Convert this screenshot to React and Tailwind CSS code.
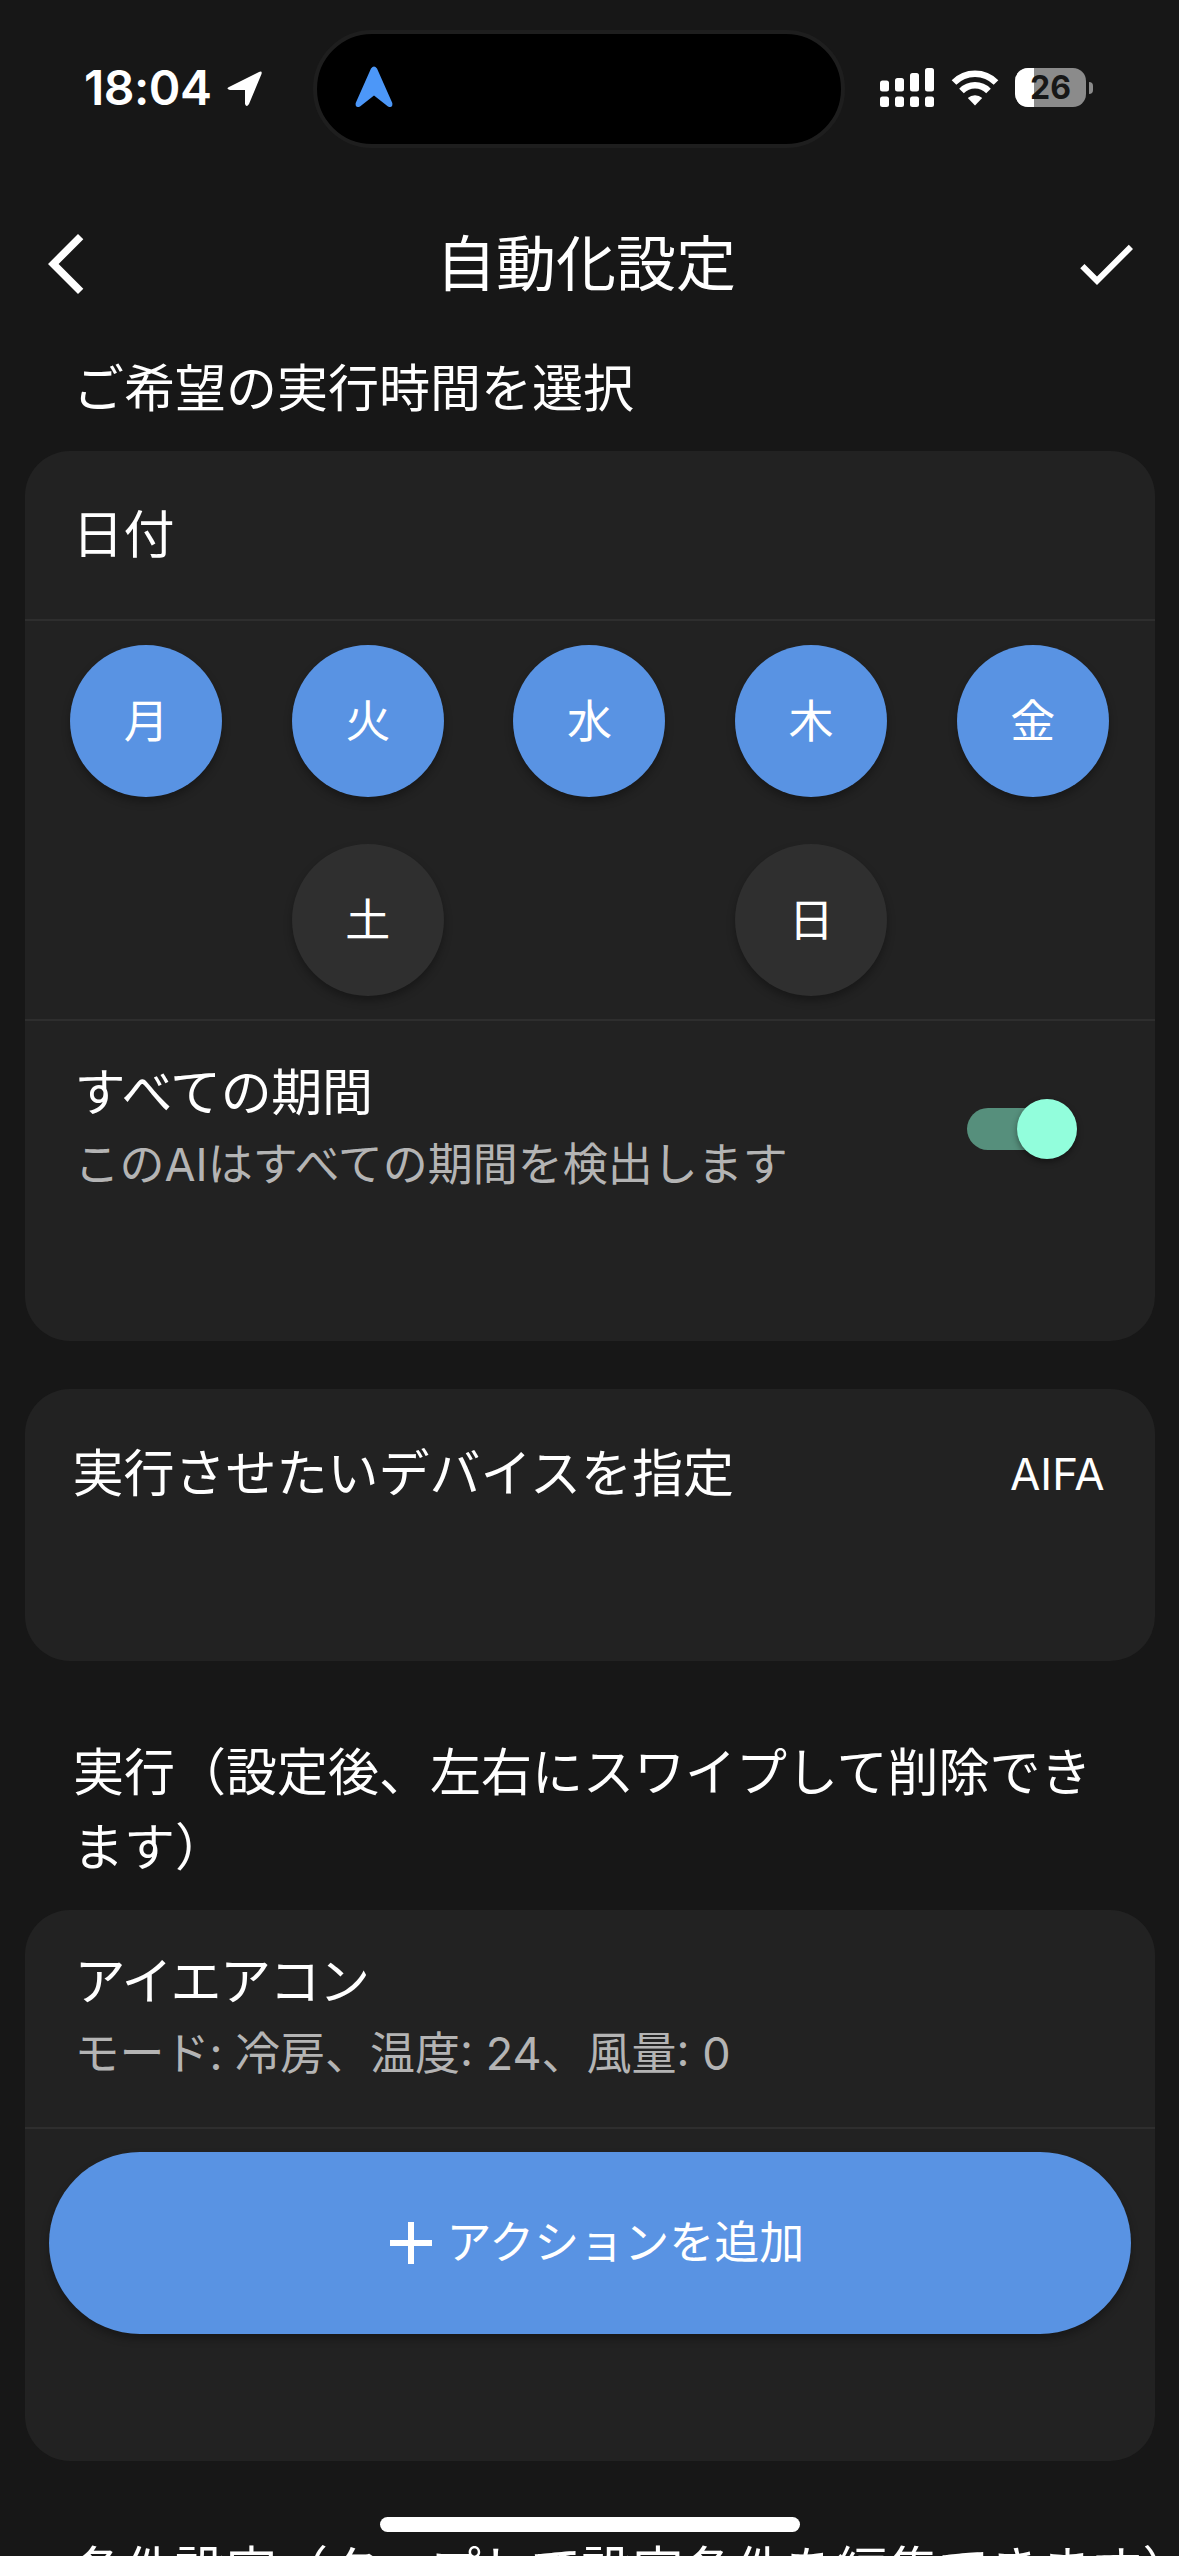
import { MdAdd, MdArrowBackIosNew, MdCheck } from "react-icons/md";

const weekdays = [
  { label: "月", active: true },
  { label: "火", active: true },
  { label: "水", active: true },
  { label: "木", active: true },
  { label: "金", active: true },
];

const weekend = [
  { label: "土", active: false },
  { label: "日", active: false },
];

const signalBars = [
  { x: 0, y: 12.5, h: 11 },
  { x: 15, y: 10, h: 13.5 },
  { x: 30, y: 5, h: 18.5 },
  { x: 45, y: 0, h: 23.5 },
];

const StatusBar = () => (
  <div className="relative h-[180px] shrink-0">
    <div className="flex h-full items-start justify-between pl-[84px] pr-[86px] pt-[66px]">
      <div className="flex items-center gap-[14px] font-['Inter',sans-serif]">
        <span className="w-[128px] whitespace-nowrap text-[48px] font-semibold leading-[44px] tracking-[-0.5px]">
          18:04
        </span>
        <svg width="38" height="38" viewBox="0 0 38 38">
          <path
            d="M3 18 L33 3 Q36.5 1.500 35.500 5 L23 35 Q20.500 39 19 35 V21 H4 Q-0.500 20 3 18Z"
            fill="#fff"
          />
        </svg>
      </div>

      <div className="flex items-start pt-[2px]">
        <svg width="54" height="39" viewBox="0 0 54 39" fill="#fff">
          {signalBars.map((bar) => (
            <g key={bar.x}>
              <rect x={bar.x} y={bar.y} width="9" height={bar.h} rx="2.5" />
              <rect x={bar.x} y="28.500" width="9" height="10.500" rx="2.5" />
            </g>
          ))}
        </svg>
        <svg
          className="ml-[17px] mt-[2px]"
          width="48"
          height="36"
          viewBox="0 0 48 36"
          fill="none"
        >
          <path d="M3 12.500 A29.500 29.500 0 0 1 45 12.500" stroke="#fff" strokeWidth="6.500" />
          <path d="M10.500 21 A19 19 0 0 1 37.500 21" stroke="#fff" strokeWidth="6.500" />
          <path d="M24 35.500 L16.800 28 A10.500 10.500 0 0 1 31.200 28Z" fill="#fff" />
        </svg>
        <div className="relative ml-[16px] flex h-[39px] w-[71px] items-center justify-center overflow-hidden rounded-[13px] bg-[#8b8b8b]">
          <div className="absolute inset-y-0 left-0 w-[19px] bg-white" />
          <span className="relative font-['Inter',sans-serif] text-[32px] font-bold leading-none text-[#171717]">
            26
          </span>
        </div>
        <div className="ml-[3px] mt-[14px] h-[12px] w-[4px] rounded-r-full bg-[#8b8b8b]" />
      </div>
    </div>

    {/* Dynamic Island */}
    <div className="absolute left-[313px] top-[30px] h-[118px] w-[532px] rounded-full border-4 border-[#1e1e1e] bg-black">
      <svg
        className="absolute left-[38px] top-[32px]"
        width="38"
        height="42"
        viewBox="0 0 38 42"
      >
        <path
          d="M16 2.500 Q19 -1.500 22 2.500 L37.300 37 Q38 42.500 33 40.500 L19 29.500 L5 40.500 Q0 42.500 0.700 37Z"
          fill="#4c97f8"
        />
      </svg>
    </div>
  </div>
);

const DayButton = ({ label, active }) => (
  <div className="flex h-[200px] flex-1 items-center justify-center">
    <button
      className={`h-[152px] w-[152px] rounded-full text-[45px] leading-none shadow-[0_5px_8px_rgba(0,0,0,0.3)] ${
        active ? "bg-[#5993e3]" : "bg-[#2f2f2f]"
      }`}
    >
      {label}
    </button>
  </div>
);

const Switch = () => (
  <div className="relative h-[62px] w-[110px]">
    <div className="absolute left-0 top-[10px] h-[42px] w-[102px] rounded-full bg-[#568f7c]" />
    <div className="absolute right-0 top-[1px] h-[60px] w-[60px] rounded-full bg-[#92fedc] shadow-[0_3px_6px_rgba(0,0,0,0.4)]" />
  </div>
);

const Card = ({ className, children }) => (
  <section
    className={`mx-[24.5px] shrink-0 overflow-hidden rounded-[45px] bg-[#222222] ${className}`}
  >
    {children}
  </section>
);

const App = () => {
  return (
    <div
      lang="ja"
      className="relative flex h-[2556px] w-[1179px] flex-col overflow-hidden bg-[#171717] font-['Inter','Noto_Sans_CJK_JP',sans-serif] text-[51px] text-white"
    >
      <StatusBar />

      <header className="flex h-[168px] shrink-0 items-center justify-between pl-[30px] pr-[37px]">
        <MdArrowBackIosNew size={72} />
        <h1 className="text-[60px] leading-none">自動化設定</h1>
        <MdCheck size={72} />
      </header>

      <h2 className="flex h-[103px] shrink-0 items-center pb-[22px] pl-[73px] leading-[75px]">
        ご希望の実行時間を選択
      </h2>

      {/* 日付 */}
      <Card className="h-[890px]">
        <div className="flex h-[170px] items-center border-b-2 border-[#2e2e2e] pl-[48px]">
          日付
        </div>
        <div className="border-b-2 border-[#2e2e2e] px-[11px]">
          <div className="flex">
            {weekdays.map((day) => (
              <DayButton key={day.label} {...day} />
            ))}
          </div>
          <div className="flex h-[198px] items-center px-[110.500px]">
            {weekend.map((day) => (
              <DayButton key={day.label} {...day} />
            ))}
          </div>
        </div>
        <div className="flex items-start justify-between pl-[50px] pr-[78px] pt-[34px]">
          <div>
            <p className="leading-[75px] tracking-[-0.400px]">すべての期間</p>
            <p className="text-[45px] leading-[70px] text-[#b4b4b4]">
              このAIはすべての期間を検出します
            </p>
          </div>
          <div className="pt-[43px]">
            <Switch />
          </div>
        </div>
      </Card>

      {/* デバイス */}
      <Card className="mt-[48px] h-[272px]">
        <div className="flex h-[170px] items-center justify-between pl-[48px] pr-[50px]">
          <span>実行させたいデバイスを指定</span>
          <span className="text-[44px]">AIFA</span>
        </div>
      </Card>

      <h2 className="h-[249px] shrink-0 pl-[73px] pr-[73px] pt-[74px] leading-[75px]">
        実行（設定後、左右にスワイプして削除でき
        <br />
        ます）
      </h2>

      {/* アクション */}
      <Card className="h-[551px]">
        <div className="h-[219px] border-b-2 border-[#2e2e2e] pl-[50px] pt-[34px]">
          <p className="leading-[75px] tracking-[-1.500px]">アイエアコン</p>
          <p className="text-[45px] leading-[70px] text-[#b4b4b4]">
            モード: 冷房、温度: 24、風量: 0
          </p>
        </div>
        <div className="px-[24px] pt-[23px]">
          <button className="flex h-[182px] w-full items-center justify-center rounded-full bg-[#5993e3] text-[45px] shadow-[0_5px_8px_rgba(0,0,0,0.3)]">
            <MdAdd size={72} />
            <span>アクションを追加</span>
          </button>
        </div>
      </Card>

      <h2 className="shrink-0 whitespace-nowrap pl-[73px] pt-[72px] leading-[75px]">
        条件設定（タップして設定条件を編集できます）
      </h2>

      <div className="absolute left-[380px] top-[2517px] h-[15px] w-[420px] rounded-full bg-white" />
    </div>
  );
};

export default App;
